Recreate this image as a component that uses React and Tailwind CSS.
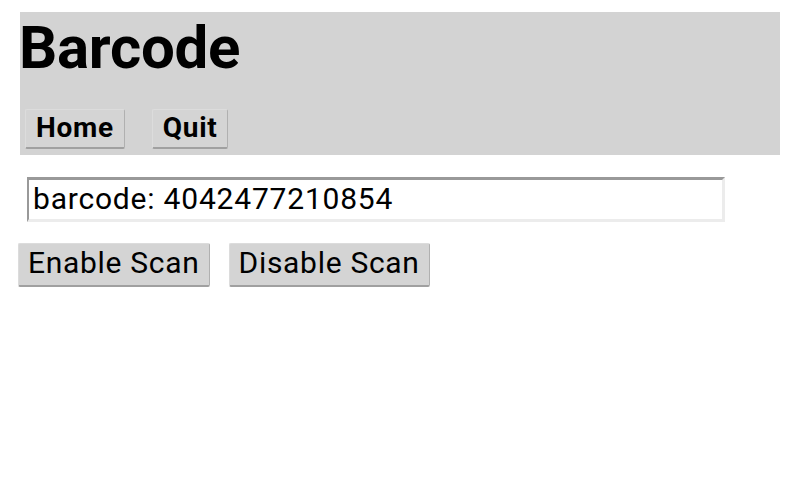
export default function App() {
  return (
    <div className="w-[800px] h-[480px] bg-white font-['Roboto',sans-serif] text-black">
      <div className="mx-5 mt-3 h-[143px] bg-[#d3d3d3]">
        <h1 className="text-[60px] font-bold leading-[68px] pt-[2px] -ml-[1px] tracking-[-0.3px]">Barcode</h1>
        <div className="flex gap-[27px] pl-[5px] pt-[27px]">
          <button className="h-10 px-[10px] pb-[2px] text-[28px] font-bold tracking-[0.7px] rounded-[2px] bg-[#d4d4d4] border border-t-[#dcdcdc] border-l-[#dcdcdc] border-r-[#b0b0b0] border-b-[#a0a0a0] border-b-2 leading-none">
            Home
          </button>
          <button className="h-10 px-[10px] pb-[2px] text-[28px] font-bold tracking-[0.7px] rounded-[2px] bg-[#d4d4d4] border border-t-[#dcdcdc] border-l-[#dcdcdc] border-r-[#b0b0b0] border-b-[#a0a0a0] border-b-2 leading-none">
            Quit
          </button>
        </div>
      </div>
      <div className="pl-[27px] pt-[22px]">
        <div className="w-[698px] h-[45px] border-t-[3px] border-l-[2px] border-t-[#999999] border-l-[#999999] border-r-[3px] border-b-[3px] border-r-[#ececec] border-b-[#ececec] flex items-center pl-[4px] pb-[1px] text-[30px] tracking-[0.8px] leading-none">
          barcode: 4042477210854
        </div>
      </div>
      <div className="flex gap-[19px] pl-[18px] pt-[21px]">
        <button className="h-[44px] px-[9px] pb-[3px] text-[30px] tracking-[0.7px] rounded-[2px] bg-[#d4d4d4] border border-t-[#dcdcdc] border-l-[#dcdcdc] border-r-[#b0b0b0] border-b-[#a0a0a0] border-b-2 leading-none">
          Enable Scan
        </button>
        <button className="h-[44px] px-[9px] pb-[3px] text-[30px] tracking-[0.7px] rounded-[2px] bg-[#d4d4d4] border border-t-[#dcdcdc] border-l-[#dcdcdc] border-r-[#b0b0b0] border-b-[#a0a0a0] border-b-2 leading-none">
          Disable Scan
        </button>
      </div>
    </div>
  );
}
